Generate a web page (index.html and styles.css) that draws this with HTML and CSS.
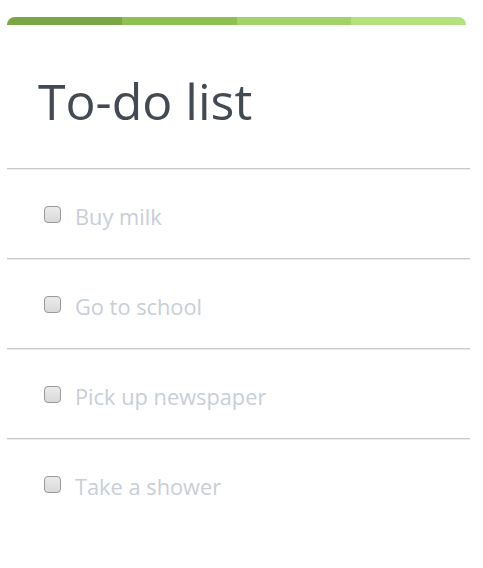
FILE: index.html
```html
<!DOCTYPE html>
<html>
<head>
<meta charset="utf-8">
<link rel="stylesheet" href="styles.css">
</head>
<body>
<div class="card">
  <div class="bar">
    <span class="seg seg1"></span>
    <span class="seg seg2"></span>
    <span class="seg seg3"></span>
    <span class="seg seg4"></span>
  </div>
  <h1 class="title">To-do list</h1>
  <ul class="list">
    <li class="item"><span class="box"></span><span class="label">Buy milk</span></li>
    <li class="item"><span class="box"></span><span class="label">Go to school</span></li>
    <li class="item"><span class="box"></span><span class="label">Pick up newspaper</span></li>
    <li class="item"><span class="box"></span><span class="label">Take a shower</span></li>
  </ul>
</div>
</body>
</html>
```
FILE: styles.css
```css
html, body {
  margin: 0;
  padding: 0;
  background: #fff;
}
body {
  font-family: "Open Sans", "Liberation Sans", sans-serif;
}
.card {
  width: 463px;
  margin: 17px 0 0 7px;
}
.bar {
  display: flex;
  width: 459px;
  height: 8px;
  border-radius: 8px 8px 0 0;
  overflow: hidden;
}
.seg { flex: 1; }
.seg1 { background: #78a843; }
.seg2 { background: #8cc152; }
.seg3 { background: #a0d468; }
.seg4 { background: #b1e27b; }
.title {
  margin: 0;
  padding: 46px 0 0 31px;
  height: 143px;
  box-sizing: border-box;
  font-size: 50px;
  font-weight: 400;
  line-height: 60px;
  color: #434a54;
}
.list {
  list-style: none;
  margin: 0;
  padding: 0;
}
.item {
  display: flex;
  align-items: center;
  height: 82px;
  padding: 7px 0 0 37px;
  border-top: 1px solid #c9c9c9;
  box-shadow: inset 0 1px 0 #ececec;
}
.box {
  box-sizing: border-box;
  width: 17px;
  height: 17px;
  border: 1px solid #999;
  border-radius: 4px;
  background: linear-gradient(#ebebeb, #d9d9d9);
  margin-right: 14px;
  margin-top: -6px;
}
.label {
  font-size: 21.8px;
  color: #c8ced7;
  line-height: 28px;
  margin-top: -1px;
}
```
